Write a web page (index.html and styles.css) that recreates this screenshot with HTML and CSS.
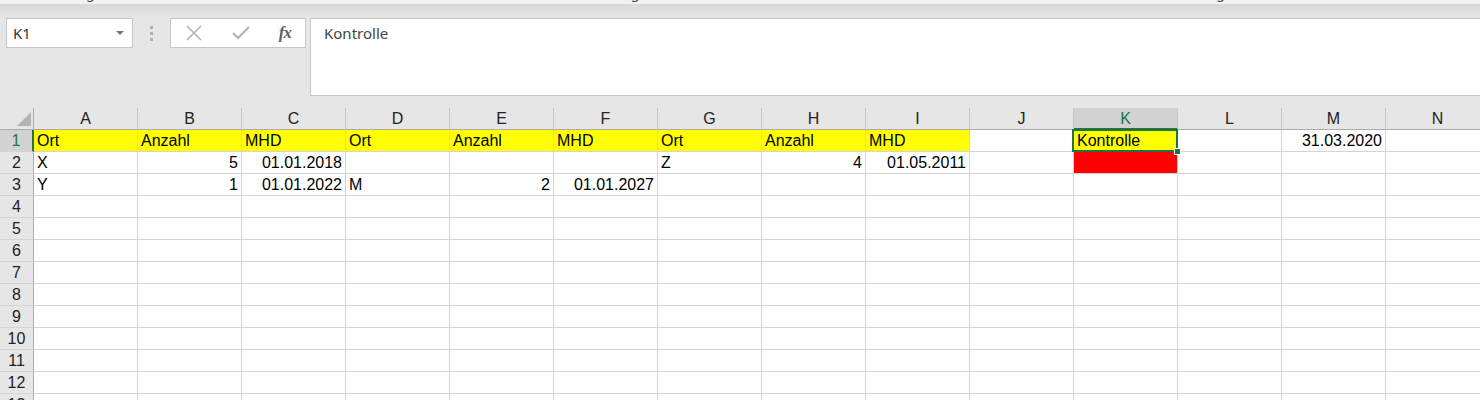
FILE: index.html
```html
<!DOCTYPE html>
<html lang="de">
<head>
    <meta charset="UTF-8">
    <title>Mappe1 - Excel</title>
    <link rel="stylesheet" href="styles.css">
</head>
<body>
    <!-- bottom edge of the ribbon -->
    <div class="ribbon-edge">
        <span class="g1">g</span>
        <span class="g2">g</span>
        <span class="g3">g</span>
    </div>
    <div class="ribbon-shadow"></div>

    <!-- Name box and formula bar -->
    <div class="toolbar">
        <div class="name-box">
            <span>K1</span>
            <span class="caret"></span>
        </div>
        <div class="grip">
            <i></i><i></i><i></i>
        </div>
        <div class="fn-box">
            <svg width="18" height="18" viewBox="0 0 18 18">
                <path d="M2 2 L16 16 M16 2 L2 16" stroke="#b3b3b3" stroke-width="1.6" fill="none"/>
            </svg>
            <svg width="20" height="18" viewBox="0 0 20 18">
                <path d="M2 9 L7 14 L18 3" stroke="#b3b3b3" stroke-width="2.2" fill="none"/>
            </svg>
            <span class="fx">fx</span>
        </div>
        <div class="formula">Kontrolle</div>
    </div>

    <!-- Sheet -->
    <div class="sheet">
        <div class="hd corner"><span class="tri"></span></div>
        <div class="hd">A</div>
        <div class="hd">B</div>
        <div class="hd">C</div>
        <div class="hd">D</div>
        <div class="hd">E</div>
        <div class="hd">F</div>
        <div class="hd">G</div>
        <div class="hd">H</div>
        <div class="hd">I</div>
        <div class="hd">J</div>
        <div class="hd sel">K</div>
        <div class="hd">L</div>
        <div class="hd">M</div>
        <div class="hd">N</div>

        <div class="rh sel">1</div>
        <div class="c yellow">Ort</div>
        <div class="c yellow">Anzahl</div>
        <div class="c yellow">MHD</div>
        <div class="c yellow">Ort</div>
        <div class="c yellow">Anzahl</div>
        <div class="c yellow">MHD</div>
        <div class="c yellow">Ort</div>
        <div class="c yellow">Anzahl</div>
        <div class="c yellow">MHD</div>
        <div class="c"></div>
        <div class="c yellow active">Kontrolle<span class="handle"></span></div>
        <div class="c"></div>
        <div class="c num">31.03.2020</div>
        <div class="c"></div>

        <div class="rh">2</div>
        <div class="c">X</div>
        <div class="c num">5</div>
        <div class="c num">01.01.2018</div>
        <div class="c"></div>
        <div class="c"></div>
        <div class="c"></div>
        <div class="c">Z</div>
        <div class="c num">4</div>
        <div class="c num">01.05.2011</div>
        <div class="c"></div>
        <div class="c red"></div>
        <div class="c"></div>
        <div class="c"></div>
        <div class="c"></div>

        <div class="rh">3</div>
        <div class="c">Y</div>
        <div class="c num">1</div>
        <div class="c num">01.01.2022</div>
        <div class="c">M</div>
        <div class="c num">2</div>
        <div class="c num">01.01.2027</div>
        <div class="c"></div>
        <div class="c"></div>
        <div class="c"></div>
        <div class="c"></div>
        <div class="c"></div>
        <div class="c"></div>
        <div class="c"></div>
        <div class="c"></div>
    </div>

    <script>
        // empty rows 4-13
        const sheet = document.querySelector(".sheet");
        for (let r = 4; r <= 13; r++) {
            const head = document.createElement("div");
            head.className = "rh";
            head.textContent = r;
            sheet.appendChild(head);
            for (let c = 0; c < 14; c++) {
                const cell = document.createElement("div");
                cell.className = "c";
                sheet.appendChild(cell);
            }
        }
    </script>
</body>
</html>
```

FILE: styles.css
```css
body {
    margin: 0;
    background: #e6e6e6;
    font-family: "Liberation Sans", Arial, sans-serif;
    overflow: hidden;
    height: 400px;
}

.ribbon-edge {
    height: 4px;
    background: #f3f2f1;
    overflow: hidden;
    display: flex;
    color: #444;
}

.ribbon-edge span {
    font-family: "Noto Sans", sans-serif;
    font-size: 14px;
    line-height: 14px;
    margin-top: -14px;
}

.g1 { margin-left: 86px; }
.g2 { margin-left: 536px; }
.g3 { margin-left: 577px; }

.ribbon-shadow {
    height: 14px;
    background: linear-gradient(#d8d8d8, #e6e6e6);
}

.toolbar {
    display: flex;
    align-items: flex-start;
    padding-left: 6px;
    height: 78px;
    margin-bottom: 12px;
}

.name-box {
    width: 127px;
    height: 30px;
    box-sizing: border-box;
    border: 1px solid #c6c6c6;
    background: #fff;
    display: flex;
    align-items: center;
    justify-content: space-between;
    padding: 0 8px 0 6px;
    font-family: "Noto Sans", sans-serif;
    font-size: 15px;
    color: #333;
}

.caret {
    width: 0;
    height: 0;
    border-left: 4px solid transparent;
    border-right: 4px solid transparent;
    border-top: 4px solid #777;
}

.grip {
    width: 37px;
    height: 30px;
    display: flex;
    flex-direction: column;
    align-items: center;
    justify-content: center;
    gap: 3px;
}

.grip i {
    width: 3px;
    height: 3px;
    background: #b0b0b0;
}

.fn-box {
    width: 136px;
    height: 30px;
    box-sizing: border-box;
    border: 1px solid #c6c6c6;
    background: #fff;
    display: flex;
    align-items: center;
    justify-content: space-between;
    padding: 0 14px 0 14px;
}

.fx {
    font-family: "Liberation Serif", serif;
    font-style: italic;
    font-weight: bold;
    font-size: 17px;
    color: #606060;
    letter-spacing: -1px;
}

.formula {
    flex: 1;
    height: 78px;
    margin-left: 4px;
    box-sizing: border-box;
    border: 1px solid #c6c6c6;
    border-right: none;
    background: #fff;
    padding: 4px 0 0 13px;
    font-family: "Noto Sans", sans-serif;
    font-size: 15px;
    color: #444;
}

.sheet {
    display: grid;
    grid-template-columns: 34px repeat(14, 104px);
    grid-auto-rows: 22px;
    background: #fff;
}

.hd {
    background: #e6e6e6;
    border-right: 1px solid #c6c6c6;
    border-bottom: 1px solid #ababab;
    text-align: center;
    font-size: 16px;
    line-height: 22px;
    color: #222;
    box-sizing: border-box;
}

.hd.sel {
    background: #d2d2d2;
    color: #217346;
    border-bottom: 2px solid #217346;
}

.corner {
    display: flex;
    justify-content: flex-end;
    align-items: flex-end;
    padding: 0 2px 3px 0;
    border-right: 1px solid #ababab;
}

.tri {
    width: 0;
    height: 0;
    border-left: 14px solid transparent;
    border-bottom: 14px solid #b4b4b4;
}

.rh {
    background: #e6e6e6;
    border-right: 1px solid #ababab;
    border-bottom: 1px solid #d4d4d4;
    text-align: center;
    font-size: 16px;
    line-height: 22px;
    color: #222;
    box-sizing: border-box;
}

.rh.sel {
    background: #d2d2d2;
    color: #217346;
    border-right: 2px solid #217346;
}

.c {
    border-right: 1px solid #d4d4d4;
    border-bottom: 1px solid #d4d4d4;
    box-sizing: border-box;
    padding: 0 3px;
    font-size: 16px;
    line-height: 22px;
    color: #000;
    white-space: nowrap;
    overflow: visible;
}

.num {
    text-align: right;
}

.yellow {
    background: #ffff00;
}

.red {
    background: #ff0000;
}

.active {
    position: relative;
}

.active::after {
    content: "";
    position: absolute;
    left: -2px;
    top: -1px;
    right: -1px;
    bottom: -1px;
    border: 2px solid #217346;
}

.handle {
    position: absolute;
    right: -4px;
    bottom: -4px;
    width: 5px;
    height: 5px;
    background: #217346;
    border: 1px solid #fff;
    z-index: 2;
}
```
